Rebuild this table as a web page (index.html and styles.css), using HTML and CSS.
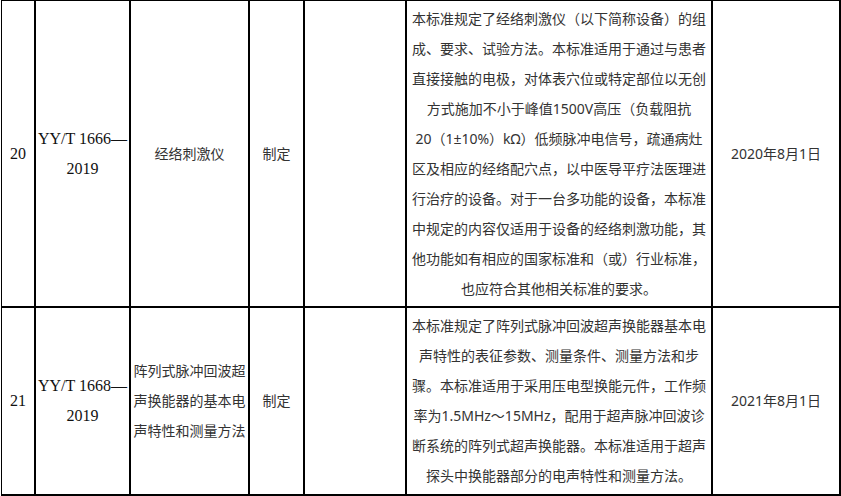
FILE: index.html
```html
<!DOCTYPE html>
<html lang="zh-CN">
<head>
<meta charset="utf-8">
<title>标准列表</title>
<link rel="stylesheet" href="styles.css">
</head>
<body>
<table class="std">
  <tr class="row-a">
    <td class="c-no serif">20</td>
    <td class="c-code serif">YY/T 1666—<br>2019</td>
    <td class="c-name">经络刺激仪</td>
    <td class="c-type">制定</td>
    <td class="c-empty"></td>
    <td class="c-desc">本标准规定了经络刺激仪（以下简称设备）的组<br>成、要求、试验方法。本标准适用于通过与患者<br>直接接触的电极，对体表穴位或特定部位以无创<br>方式施加不小于峰值1500V高压（负载阻抗<br>20（1±10%）kΩ）低频脉冲电信号，疏通病灶<br>区及相应的经络配穴点，以中医导平疗法医理进<br>行治疗的设备。对于一台多功能的设备，本标准<br>中规定的内容仅适用于设备的经络刺激功能，其<br>他功能如有相应的国家标准和（或）行业标准，<br>也应符合其他相关标准的要求。</td>
    <td class="c-date">2020年8月1日</td>
  </tr>
  <tr class="row-b">
    <td class="c-no serif">21</td>
    <td class="c-code serif">YY/T 1668—<br>2019</td>
    <td class="c-name">阵列式脉冲回波超声换能器的基本电声特性和测量方法</td>
    <td class="c-type">制定</td>
    <td class="c-empty"></td>
    <td class="c-desc">本标准规定了阵列式脉冲回波超声换能器基本电<br>声特性的表征参数、测量条件、测量方法和步<br>骤。本标准适用于采用压电型换能元件，工作频<br>率为1.5MHz～15MHz，配用于超声脉冲回波诊<br>断系统的阵列式超声换能器。本标准适用于超声<br>探头中换能器部分的电声特性和测量方法。</td>
    <td class="c-date">2021年8月1日</td>
  </tr>
</table>
</body>
</html>
```

FILE: styles.css
```css
html, body {
  margin: 0;
  padding: 0;
  background: #fff;
}

.std {
  margin-left: 1px;
  width: 840px;
  table-layout: fixed;
  border-collapse: separate;
  border-spacing: 0;
  border-top: 1px solid #000;
  border-left: 1px solid #000;
  font-family: "Noto Sans", "Noto Sans CJK SC", sans-serif;
  font-size: 14px;
  line-height: 30px;
  color: #333;
}

.std td {
  padding: 0;
  border-right: 2px solid #000;
  border-bottom: 2px solid #000;
  text-align: center;
  vertical-align: middle;
  overflow: hidden;
}

.row-a td { height: 305px; }
.row-b td { height: 186px; }

.serif {
  font-family: "Liberation Serif", "Noto Sans CJK SC", serif;
  font-size: 16px;
  color: #111;
}

.c-no { width: 32px; }
.c-code { width: 93px; }
.c-name { width: 117px; }
.c-type { width: 53px; }
.c-empty { width: 100px; }
.c-desc { width: 304px; white-space: nowrap; }
.c-date { width: 126px; }
```
